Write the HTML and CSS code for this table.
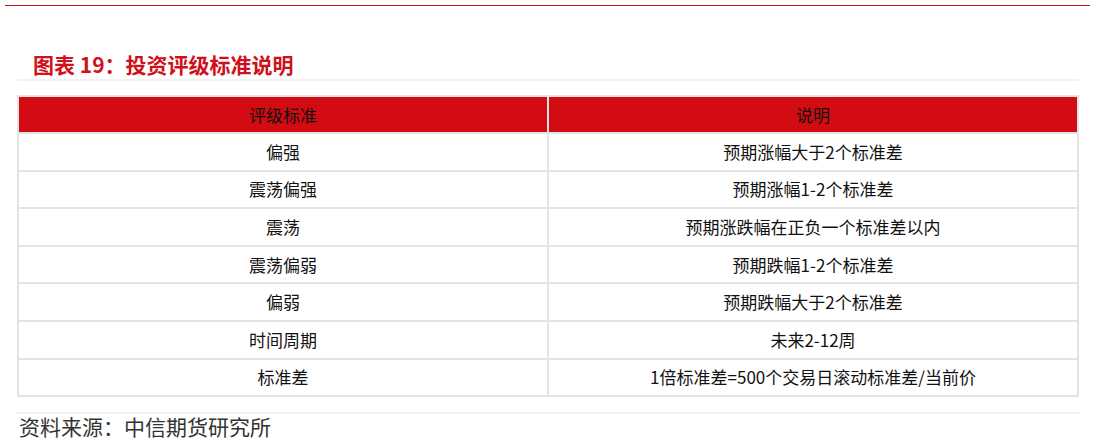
FILE: index.html
```html
<!DOCTYPE html>
<html lang="zh-CN">
<head>
<meta charset="utf-8">
<title>投资评级标准说明</title>
<link rel="stylesheet" href="styles.css">
</head>
<body>
<div class="page">
  <div class="topline"></div>
  <div class="content">
    <h2 class="title">图表 19：投资评级标准说明</h2>
    <div class="rule"></div>
    <table class="grid">
      <thead>
        <tr><th>评级标准</th><th>说明</th></tr>
      </thead>
      <tbody>
        <tr><td>偏强</td><td>预期涨幅大于2个标准差</td></tr>
        <tr><td>震荡偏强</td><td>预期涨幅1-2个标准差</td></tr>
        <tr><td>震荡</td><td>预期涨跌幅在正负一个标准差以内</td></tr>
        <tr><td>震荡偏弱</td><td>预期跌幅1-2个标准差</td></tr>
        <tr><td>偏弱</td><td>预期跌幅大于2个标准差</td></tr>
        <tr><td>时间周期</td><td>未来2-12周</td></tr>
        <tr><td>标准差</td><td>1倍标准差=500个交易日滚动标准差/当前价</td></tr>
      </tbody>
    </table>
    <div class="rule rule-bottom"></div>
    <p class="source">资料来源：中信期货研究所</p>
  </div>
</div>
</body>
</html>
```

FILE: styles.css
```css
html, body {
  margin: 0;
  padding: 0;
  background: #ffffff;
}

.page {
  width: 1096px;
  height: 440px;
  overflow: hidden;
  padding-top: 5px;
  box-sizing: border-box;
  font-family: "Noto Sans CJK SC", "Noto Sans", sans-serif;
}

.topline {
  margin-left: 5px;
  width: 1085px;
  height: 1px;
  background: #c8141c;
}

.content {
  margin-left: 17px;
  width: 1062px;
}

.title {
  margin: 46px 0 0 0;
  padding-left: 16px;
  font-size: 21px;
  line-height: 24px;
  font-weight: 700;
  color: #d0101a;
}

.rule {
  margin-top: 3px;
  height: 2px;
  background: #f2f2f2;
}

.grid {
  margin-top: 14px;
  width: 1062px;
  border-collapse: collapse;
  table-layout: fixed;
  font-size: 17px;
  color: #111111;
}

.grid th,
.grid td {
  border: 2px solid #e4e4e4;
  height: 35.6px;
  padding: 0;
  text-align: center;
  vertical-align: middle;
  font-weight: 400;
  line-height: 20px;
}

.grid th {
  background: #d30b12;
  color: #111111;
  height: 35px;
}

.rule-bottom {
  margin-top: 15px;
}

.source {
  margin: 1px 0 0 2px;
  font-size: 21px;
  line-height: 22px;
  color: #333333;
}
```
